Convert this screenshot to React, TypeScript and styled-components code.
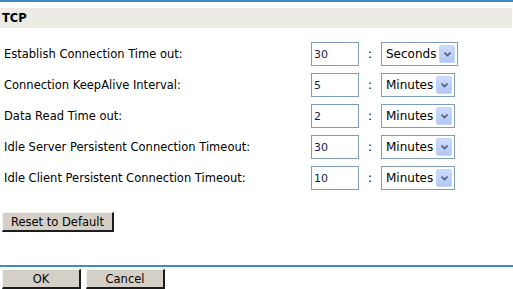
import { Fragment } from "react";
import styled, { createGlobalStyle } from "styled-components";

const GlobalStyle = createGlobalStyle`
  html, body {
    margin: 0;
    padding: 0;
    background: #ffffff;
  }
  body {
    font-family: "DejaVu Sans", "Liberation Sans", sans-serif;
    font-size: 11px;
    color: #000000;
  }
`;

const Page = styled.div`
  width: 513px;
  height: 289px;
  overflow: hidden;
  display: flex;
  flex-direction: column;
`;

const Rule = styled.div<{ $gap: number }>`
  height: 2px;
  background: #428bc2;
  margin-bottom: ${(p) => p.$gap}px;
`;

const Header = styled.div`
  height: 20px;
  background: #ecebe6;
  margin-right: 1px;
  padding-left: 2px;
  display: flex;
  align-items: center;
  font-weight: bold;
  font-size: 11.5px;
`;

const Form = styled.div`
  display: grid;
  grid-template-columns: 307px 48px 22px auto;
  row-gap: 7px;
  padding: 14px 0 0 4px;
  align-items: center;
`;

const Label = styled.div`
  font-size: 11.5px;
  line-height: 24px;
  white-space: nowrap;
`;

const TextBox = styled.input`
  box-sizing: border-box;
  width: 48px;
  height: 24px;
  border: 1px solid #7f9db9;
  padding: 0 2px;
  font-family: "DejaVu Sans", sans-serif;
  font-size: 11px;
  color: #1a1a4a;
  outline: none;
`;

const Colon = styled.div`
  text-align: center;
  font-size: 12px;
`;

const Select = styled.div`
  box-sizing: border-box;
  display: inline-flex;
  align-items: center;
  height: 24px;
  border: 1px solid #7f9db9;
  padding: 0 2px 0 4px;
  gap: 3px;
  justify-self: start;
  font-size: 12px;
`;

const DropButton = styled.span`
  width: 16px;
  height: 18px;
  border-radius: 2px;
  background: linear-gradient(#cddcfc, #b2c7f4);
  border: 1px solid #c3d3fd;
  box-sizing: border-box;
  display: flex;
  align-items: center;
  justify-content: center;
`;

const Button = styled.button<{ $width: number }>`
  box-sizing: border-box;
  width: ${(p) => p.$width}px;
  height: 20px;
  background: #d4d0c8;
  border-style: solid;
  border-width: 1px 2px 2px 1px;
  border-color: #f4f2ee #1c1c1c #1c1c1c #f4f2ee;
  font-family: "DejaVu Sans", sans-serif;
  font-size: 11.5px;
  color: #000;
  padding: 0;
`;

const ResetRow = styled.div`
  padding: 22px 0 0 2px;
  flex: 1;
`;

const Footer = styled.div`
  display: flex;
  gap: 5px;
  padding-left: 2px;
`;

const rows = [
  { label: "Establish Connection Time out:", value: "30", unit: "Seconds" },
  { label: "Connection KeepAlive Interval:", value: "5", unit: "Minutes" },
  { label: "Data Read Time out:", value: "2", unit: "Minutes" },
  { label: "Idle Server Persistent Connection Timeout:", value: "30", unit: "Minutes" },
  { label: "Idle Client Persistent Connection Timeout:", value: "10", unit: "Minutes" },
];

function Chevron() {
  return (
    <svg width="7" height="5" viewBox="0 0 7 5">
      <path d="M0.5 0.5 L3.5 3.5 L6.5 0.5" fill="none" stroke="#4d6185" strokeWidth="1.6" />
    </svg>
  );
}

export default function App() {
  return (
    <Page>
      <GlobalStyle />
      <Rule $gap={6} />
      <Header>TCP</Header>

      <Form>
        {rows.map((r) => (
          <Fragment key={r.label}>
            <Label>{r.label}</Label>
            <TextBox defaultValue={r.value} />
            <Colon>:</Colon>
            <Select>
              {r.unit}
              <DropButton>
                <Chevron />
              </DropButton>
            </Select>
          </Fragment>
        ))}
      </Form>

      <ResetRow>
        <Button $width={112}>Reset to Default</Button>
      </ResetRow>

      <Rule $gap={2} />
      <Footer>
        <Button $width={79}>OK</Button>
        <Button $width={79}>Cancel</Button>
      </Footer>
    </Page>
  );
}
